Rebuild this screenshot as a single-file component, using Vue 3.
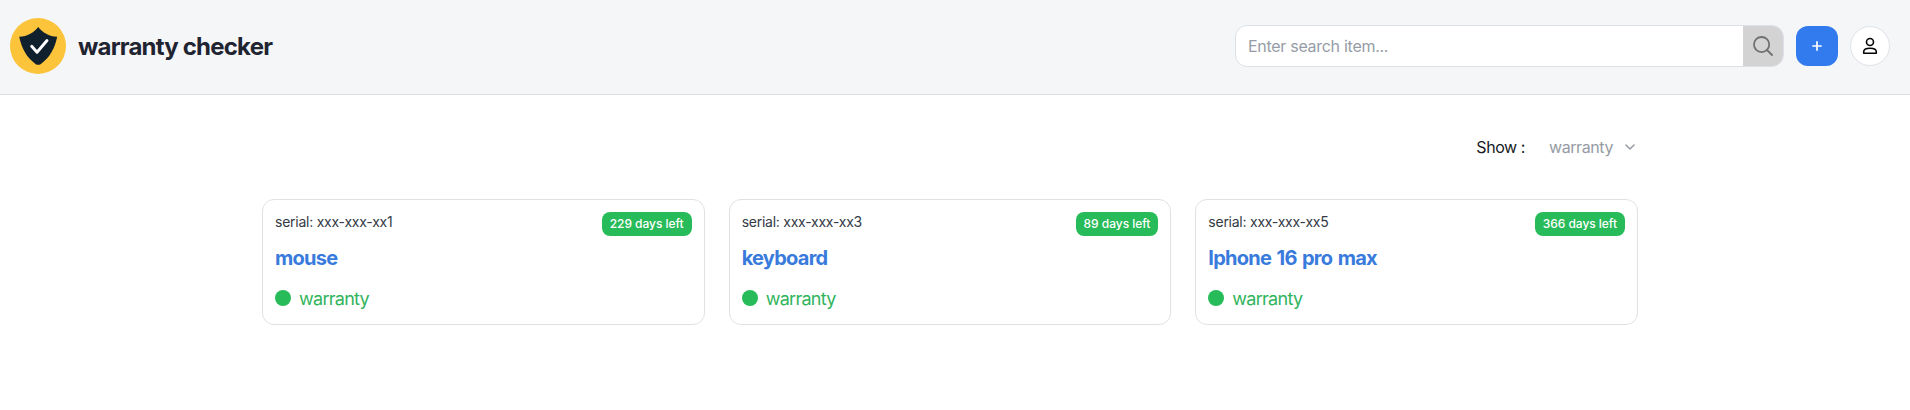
<script setup>
const items = [
  { serial: 'xxx-xxx-xx1', name: 'mouse', days: 229 },
  { serial: 'xxx-xxx-xx3', name: 'keyboard', days: 89 },
  { serial: 'xxx-xxx-xx5', name: 'Iphone 16 pro max', days: 366 },
]
</script>

<template>
  <div class="page">
    <header class="topbar">
      <a class="brand">
        <svg class="logo" viewBox="0 0 56 56" aria-hidden="true">
          <circle cx="28" cy="28" r="28" fill="#fcc43a" />
          <path d="M28.200 9 C24 14.500 17.500 18.500 9.200 18.800 C11.500 30 16.500 39.500 25.500 45.900 Q28.200 47.700 30.900 45.900 C40 39.500 45 30 47.200 18.800 C39 18.500 32.500 14.500 28.200 9Z" fill="#10202d" />
          <path d="M21.700 28.300 L27 34.300 L37 22.500" fill="none" stroke="#fff" stroke-width="2.900" stroke-linecap="round" stroke-linejoin="round" />
        </svg>
        <h1 class="title">warranty checker</h1>
      </a>
      <div class="actions">
        <div class="search">
          <input class="field" type="text" placeholder="Enter search item..." />
          <button class="find" aria-label="Search">
            <svg width="20" height="20" viewBox="0 0 20 20" fill="none" stroke="#707070" stroke-width="1.800" stroke-linecap="round">
              <circle cx="8.600" cy="8.600" r="7.600" />
              <path d="M14 14 L19 19" />
            </svg>
          </button>
        </div>
        <button class="add" aria-label="Add item">
          <svg width="10" height="10" viewBox="0 0 10 10" stroke="#fff" stroke-width="1.700"><path d="M5 .3V9.700M.3 5H9.700" /></svg>
        </button>
        <button class="user" aria-label="Account">
          <svg width="16" height="18" viewBox="0 0 16 18" fill="none" stroke="#050505" stroke-width="1.600" stroke-linejoin="round">
            <circle cx="8" cy="5" r="3.500" />
            <path d="M1.700 16.300 V14.800 C1.700 12.300 4.100 11.200 8 11.200 S14.300 12.300 14.300 14.800 V16.300Z" />
          </svg>
        </button>
      </div>
    </header>

    <main class="content">
      <div class="filter">
        <span class="label">Show :</span>
        <button class="select">
          <span class="chosen">warranty</span>
          <svg width="10" height="6" viewBox="0 0 10 6" fill="none" stroke="#989da6" stroke-width="1.600" stroke-linecap="round" stroke-linejoin="round"><path d="M1 1L5 5L9 1" /></svg>
        </button>
      </div>
      <section class="cards">
        <article v-for="item in items" :key="item.serial" class="card">
          <div class="head">
            <span class="serial">serial: {{ item.serial }}</span>
            <span class="badge">{{ item.days }} days left</span>
          </div>
          <h2 class="name">{{ item.name }}</h2>
          <div class="status"><i class="dot"></i><span class="state">warranty</span></div>
        </article>
      </section>
    </main>
  </div>
</template>

<style>
body { margin: 0; background: #fff; }
</style>

<style scoped>
.page { min-height: 410px; font-family: Inter, "Liberation Sans", sans-serif; color: #1f2430; }
.page * { box-sizing: border-box; }
button { border: 0; padding: 0; font: inherit; display: flex; align-items: center; justify-content: center; }
.topbar { height: 95px; background: #f4f6f8; border-bottom: 1px solid #dcdfe5; display: flex; align-items: center; justify-content: space-between; padding: 0 20px 2px 10px; }
.brand { display: flex; align-items: center; gap: 12px; }
.logo { width: 56px; height: 56px; }
.title { margin: 0; padding-top: 1px; font-size: 24px; line-height: 32px; font-weight: 700; letter-spacing: -0.8px; }
.actions { display: flex; align-items: center; gap: 12px; }
.search { width: 549px; height: 42px; display: flex; border: 1px solid #dde0e6; border-radius: 12px; overflow: hidden; background: #fff; }
.field { flex: 1; min-width: 0; border: 0; outline: 0; padding: 0 12px; background: transparent; font-family: inherit; font-size: 16px; letter-spacing: -0.29px; }
.field::placeholder { color: #969ca7; opacity: 1; }
.find { width: 40px; background: #d3d3d3; }
.add { width: 42px; height: 40px; background: #317bee; border-radius: 12px; }
.user { width: 40px; height: 40px; border: 1px solid #dfe2e7; border-radius: 50%; background: #fff; }
.content { width: 1376px; margin: 0 auto 0 262px; padding-top: 32px; }
.filter { height: 40px; display: flex; align-items: center; justify-content: flex-end; gap: 24px; padding-right: 3px; font-size: 16px; letter-spacing: -0.42px; }
.label { color: #171b24; }
.select { background: transparent; color: #969ba4; gap: 12px; letter-spacing: inherit; }
.cards { display: grid; grid-template-columns: repeat(3, 1fr); gap: 24px; margin-top: 32px; }
.card { height: 126px; border: 1px solid #dfe2e5; border-radius: 12px; padding: 12px; }
.head { height: 24px; display: flex; justify-content: space-between; align-items: flex-start; }
.serial { font-size: 14px; line-height: 20px; letter-spacing: -0.25px; color: #343a46; }
.badge { height: 24px; padding: 4px 8px; border-radius: 8px; background: #27bb59; color: #fff; font-size: 12px; line-height: 16px; font-weight: 500; letter-spacing: -0.04px; }
.name { margin: 8px 0 0; font-size: 20px; line-height: 28px; font-weight: 650; letter-spacing: -0.75px; word-spacing: 1.4px; color: #397bdc; }
.status { margin-top: 12px; height: 28px; display: flex; align-items: center; gap: 8px; color: #31b45c; font-size: 18px; letter-spacing: -0.72px; }
.dot { width: 16px; height: 16px; border-radius: 50%; background: #27bb59; }
</style>
